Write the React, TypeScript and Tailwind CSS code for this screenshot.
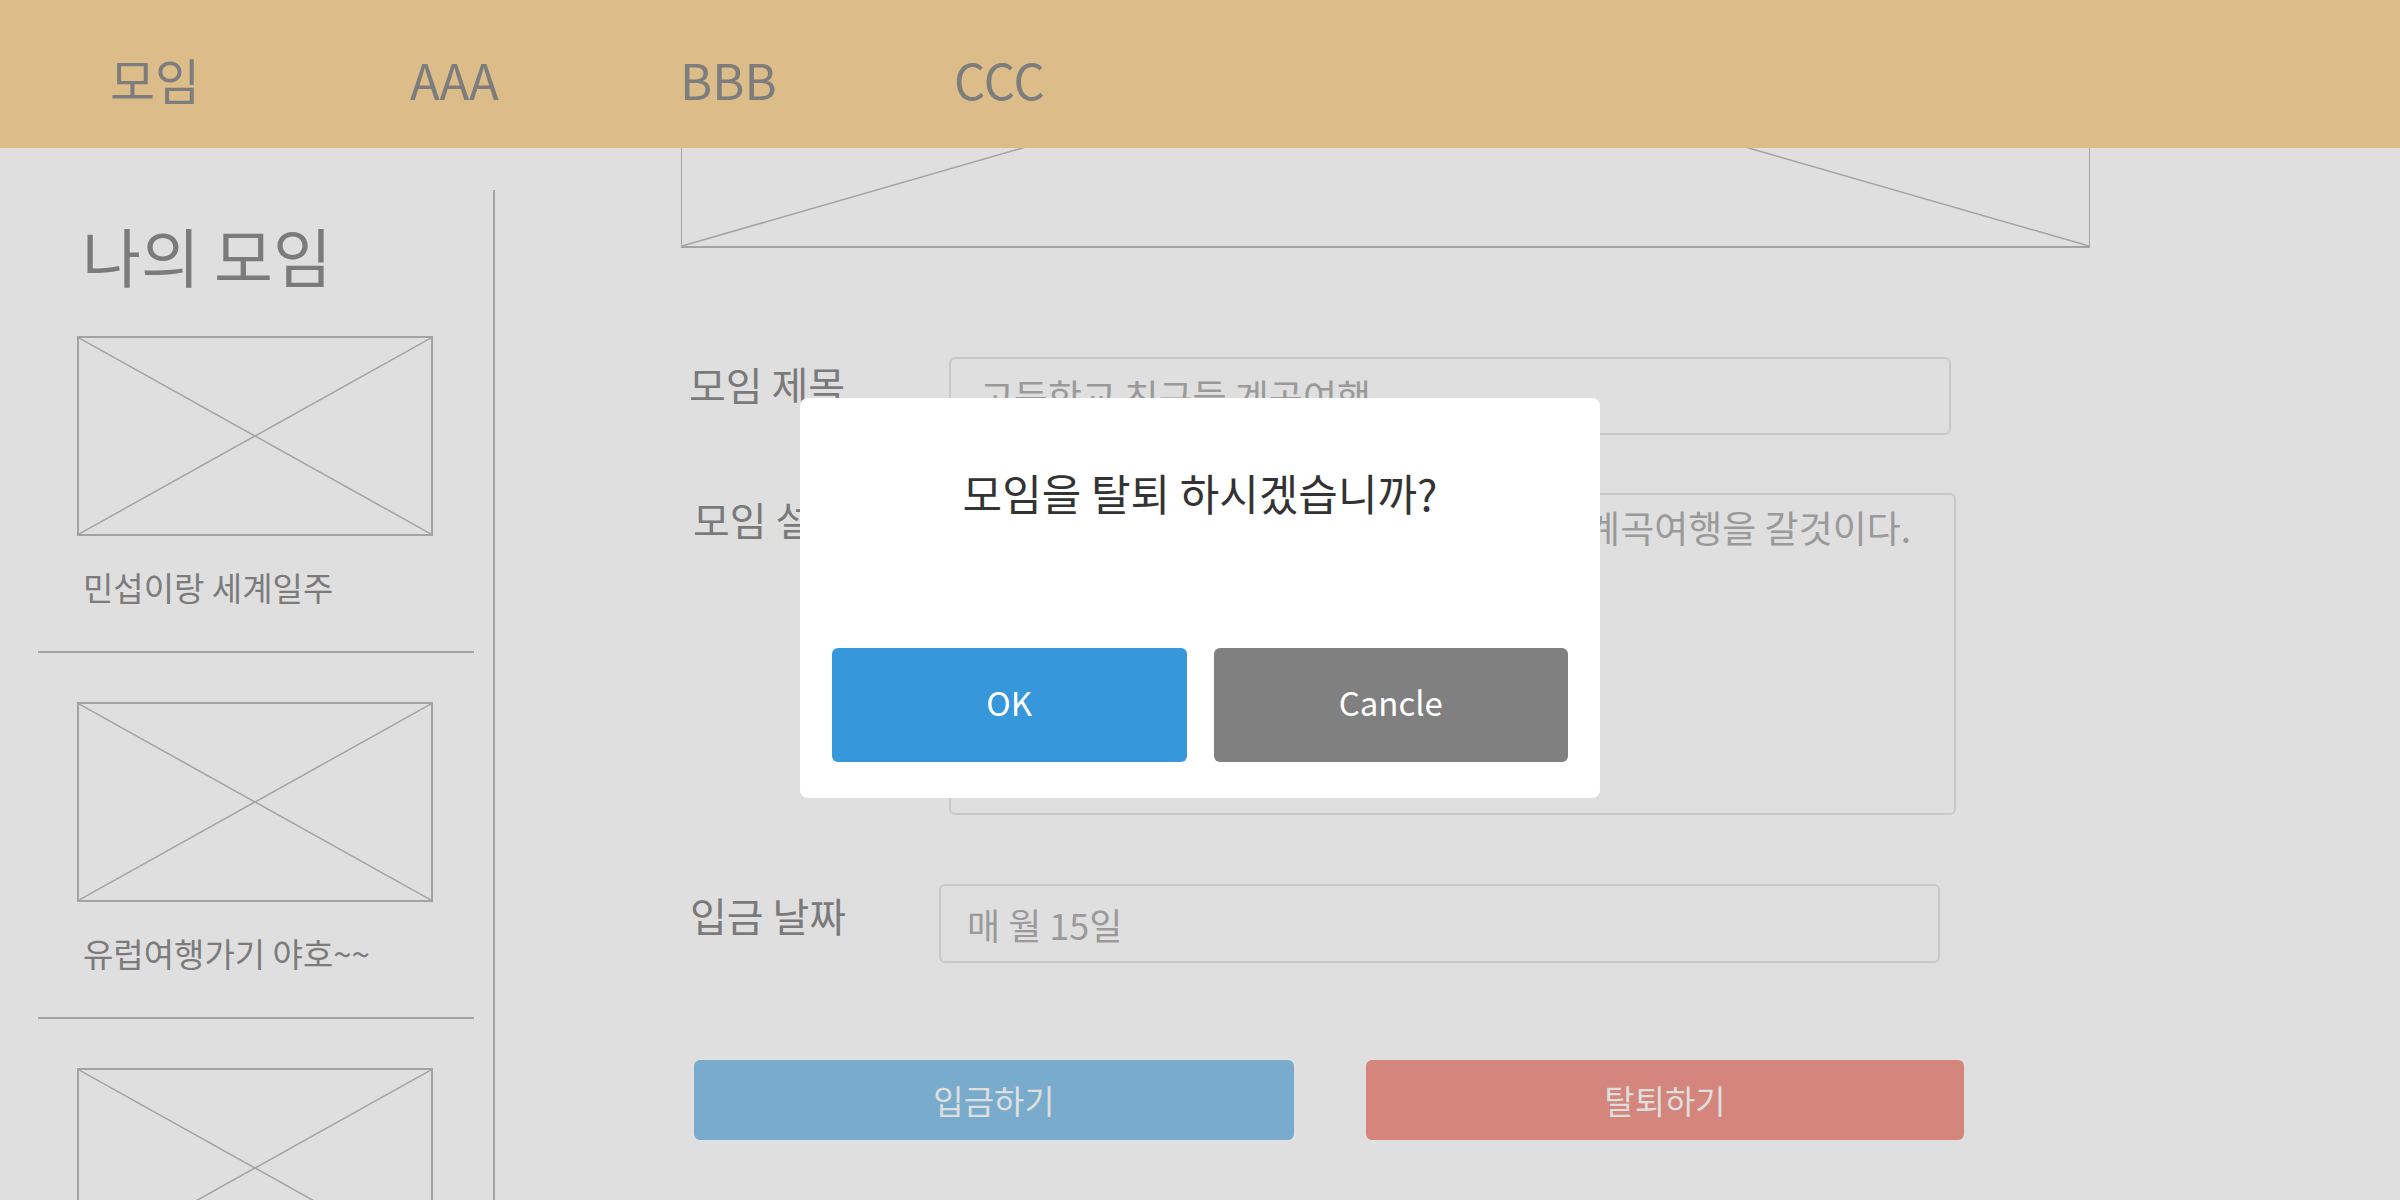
import React from 'react';

const navItems = [
  { title: '모임', width: 'w-[300px]' },
  { title: 'AAA', width: 'w-[270px]' },
  { title: 'BBB', width: 'w-[274px]' },
  { title: 'CCC', width: 'w-auto' },
];

const groups = ['민섭이랑 세계일주', '유럽여행가기 야호~~', ''];

function Placeholder({ className }: { className: string }) {
  return (
    <div className={`relative border-2 border-[#a3a3a3] ${className}`}>
      <svg className="absolute inset-0 h-full w-full" viewBox="0 0 100 100" preserveAspectRatio="none">
        <line x1="0" y1="0" x2="100" y2="100" stroke="#a3a3a3" strokeWidth="1.5" vectorEffect="non-scaling-stroke" />
        <line x1="100" y1="0" x2="0" y2="100" stroke="#a3a3a3" strokeWidth="1.5" vectorEffect="non-scaling-stroke" />
      </svg>
    </div>
  );
}

export default function App() {
  return (
    <div className="relative flex h-[1200px] w-[2400px] flex-col overflow-hidden bg-[#dfdfdf] font-['Noto_Sans_CJK_KR','Noto_Sans',sans-serif]">
      {/* Header */}
      <header className="flex h-[148px] shrink-0 items-center bg-[#dcbc89] pl-[110px] pt-2">
        {navItems.map((item) => (
          <span key={item.title} className={`${item.width} text-[49px] leading-none text-[#7d7d7d]`}>
            {item.title}
          </span>
        ))}
      </header>

      <div className="flex flex-1">
        {/* Sidebar */}
        <aside className="mt-[42px] w-[495px] shrink-0 border-r-2 border-[#a3a3a3] pt-[32px]">
          <h2 className="pl-[82px] text-[64px] leading-none text-[#7b7b7b]">나의 모임</h2>
          <ul className="mt-[50px]">
            {groups.map((name, i) => (
              <li key={i} className={i > 0 ? 'mt-[49px]' : ''}>
                <Placeholder className="ml-[77px] h-[200px] w-[356px]" />
                {name && (
                  <>
                    <p className="ml-[83px] mt-[35px] text-[33px] leading-none text-[#7b7b7b]">{name}</p>
                    <div className="ml-[38px] mt-[47px] h-[2px] w-[436px] bg-[#a3a3a3]" />
                  </>
                )}
              </li>
            ))}
          </ul>
        </aside>

        {/* Main */}
        <main className="flex-1 overflow-hidden pl-[186px]">
          <Placeholder className="-mt-[309px] h-[409px] w-[1409px] border-x" />

          <div className="mt-[109px] flex items-start">
            <label className="ml-[8px] mt-[7px] w-[260px] text-[40px] leading-none text-[#7a7a7a]">모임 제목</label>
            <div className="flex h-[78px] w-[1002px] items-center rounded-[6px] border-2 border-[#c9c9c9] pl-[29px] text-[37px] leading-none text-[#9a9a9a]">
              고등학교 친구들 계곡여행
            </div>
          </div>

          <div className="mt-[58px] flex items-start">
            <label className="ml-[12px] mt-[6px] w-[256px] text-[40px] leading-none text-[#7a7a7a]">모임 설명</label>
            <div className="h-[322px] w-[1007px] rounded-[6px] border-2 border-[#c9c9c9] pl-[15px] pt-[14px] text-[37px] leading-none text-[#9a9a9a]">
              고등학교 친구들과 이번 여름에는 다같이 계곡여행을 갈것이다.
            </div>
          </div>

          <div className="mt-[69px] flex items-start">
            <label className="ml-[9px] mt-[11px] w-[249px] text-[40px] leading-none text-[#7a7a7a]">입금 날짜</label>
            <div className="flex h-[79px] w-[1001px] items-center rounded-[6px] border-2 border-[#c9c9c9] pl-[26px] text-[36px] leading-none text-[#9a9a9a]">
              매 월 15일
            </div>
          </div>

          <div className="ml-[13px] mt-[97px] flex gap-[72px]">
            <button className="flex h-[80px] w-[600px] items-center justify-center rounded-[6px] bg-[#79abcd] text-[33px] leading-none text-[#dedede]">
              입금하기
            </button>
            <button className="flex h-[80px] w-[598px] items-center justify-center rounded-[6px] bg-[#d4857c] text-[33px] leading-none text-[#dedede]">
              탈퇴하기
            </button>
          </div>
        </main>
      </div>

      {/* Confirm dialog */}
      <div className="absolute inset-0 flex items-center justify-center pb-[4px]">
        <div className="flex h-[400px] w-[800px] flex-col justify-between rounded-[8px] bg-white px-[32px] pb-[36px] pt-[73px]">
          <p className="text-center text-[43px] leading-none text-[#333333]">모임을 탈퇴 하시겠습니까?</p>
          <div className="flex gap-[27px]">
            <button className="flex h-[114px] flex-1 items-center justify-center rounded-[6px] bg-[#3697db] pb-[4px] text-[33px] text-white">
              OK
            </button>
            <button className="flex h-[114px] flex-1 items-center justify-center rounded-[6px] bg-[#808080] pb-[4px] text-[33px] text-white">
              Cancle
            </button>
          </div>
        </div>
      </div>
    </div>
  );
}
